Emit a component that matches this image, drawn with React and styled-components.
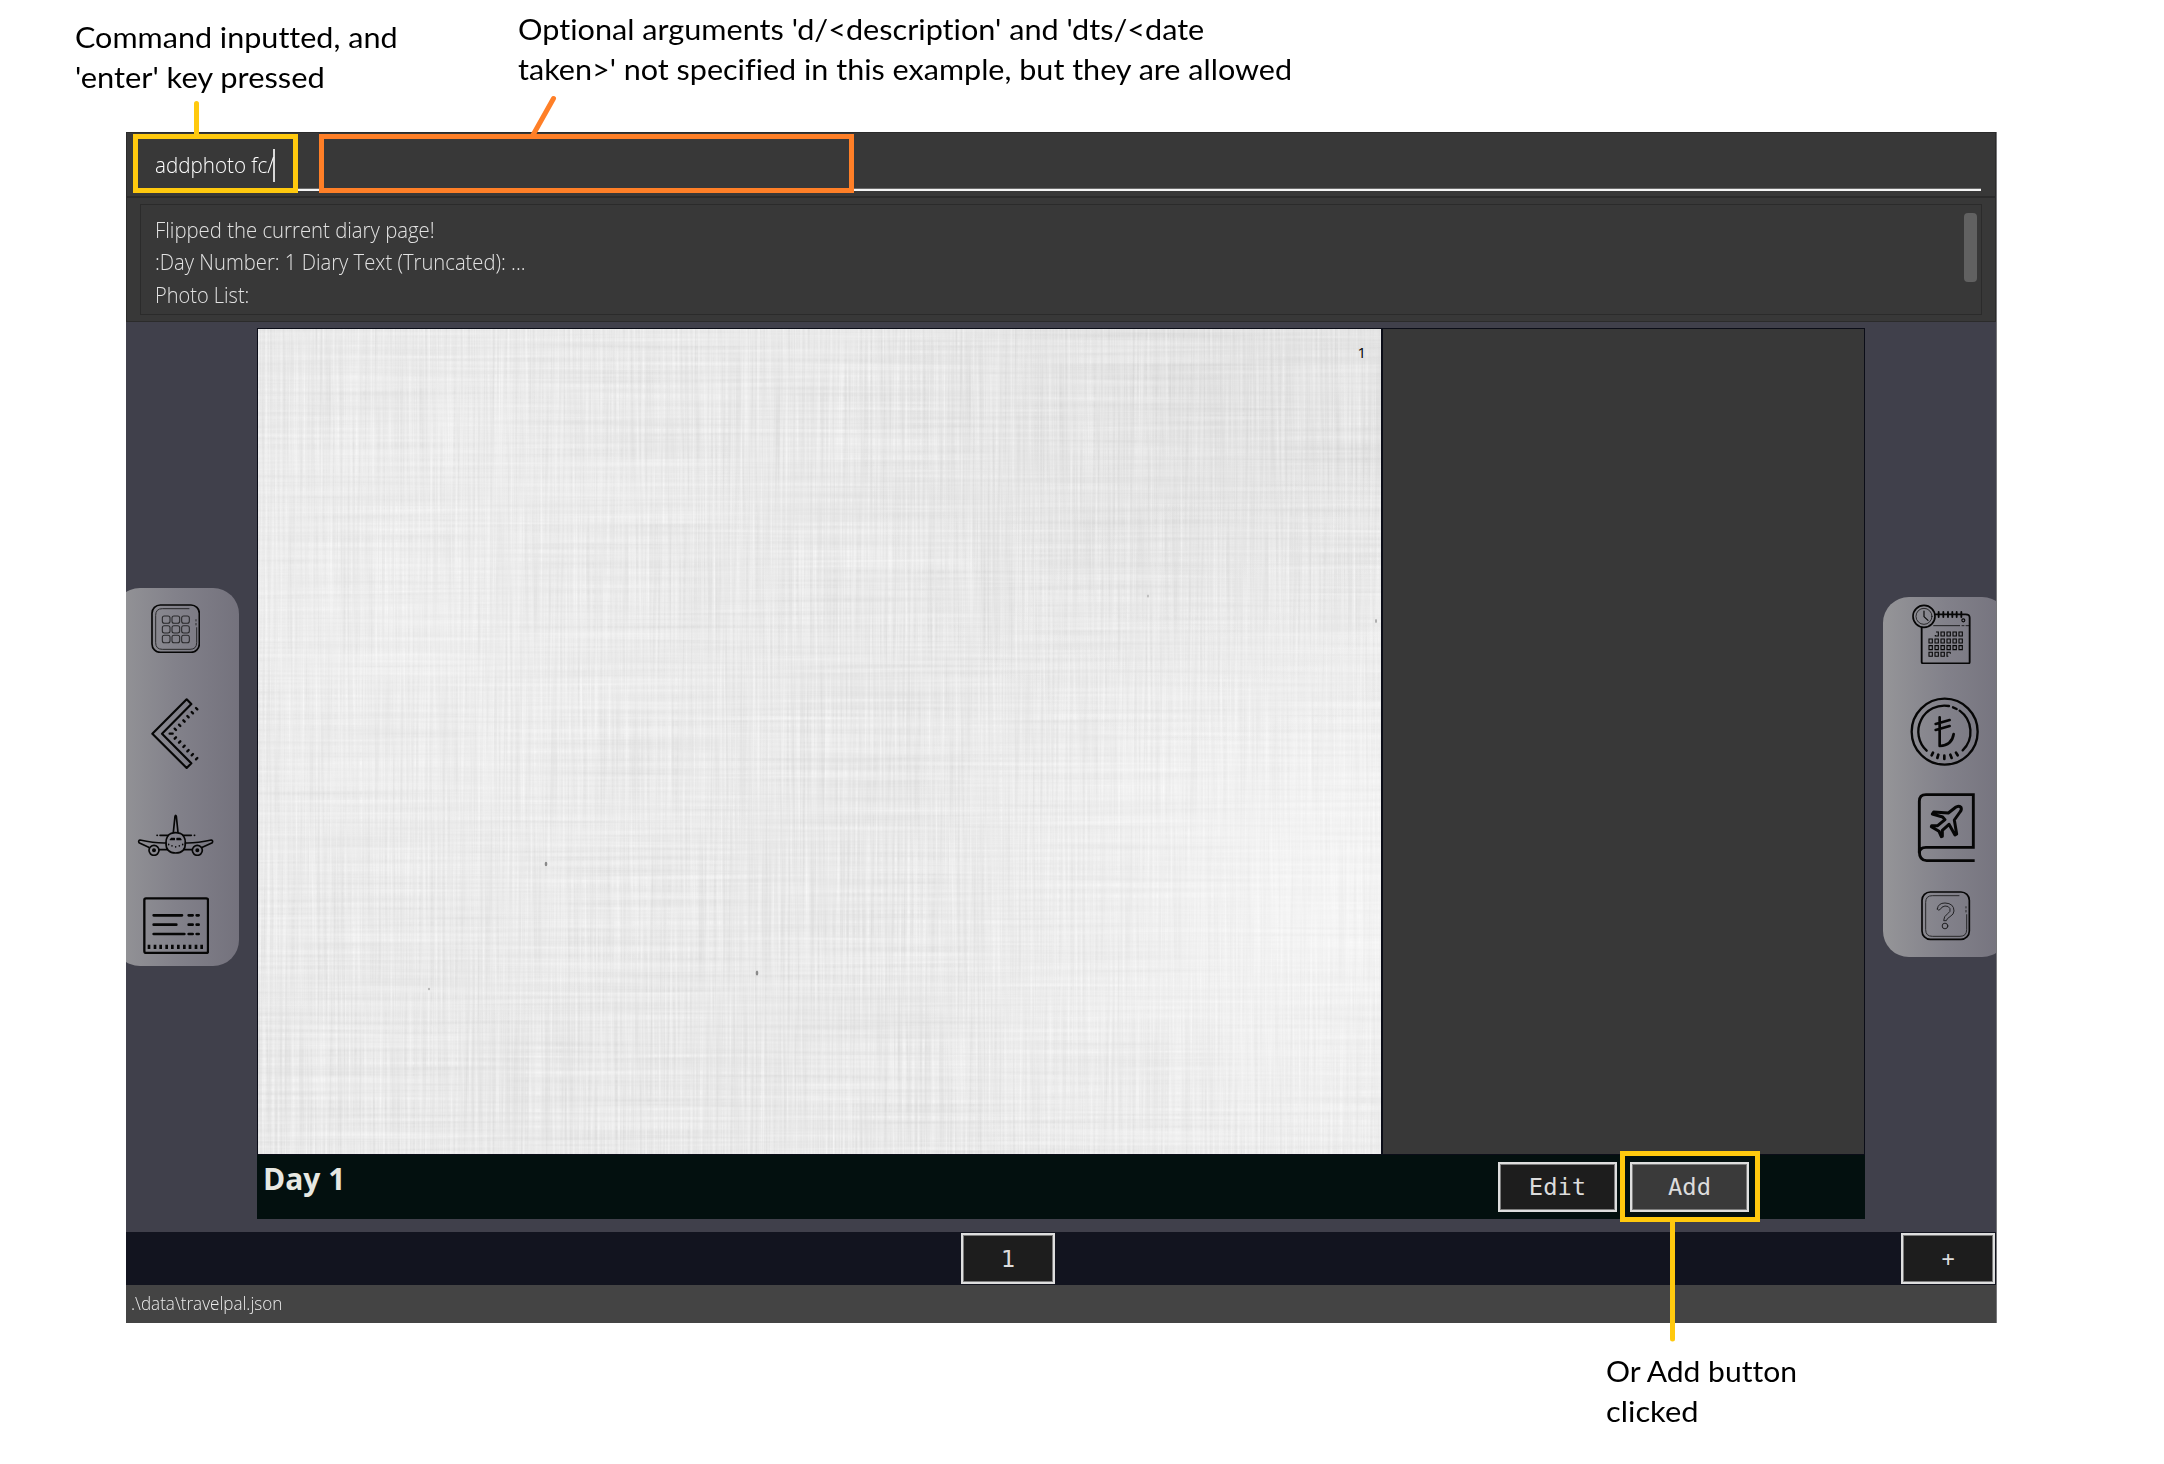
import React, { useLayoutEffect, useRef, useState } from 'react';
import styled, { createGlobalStyle } from 'styled-components';

const GlobalStyle = createGlobalStyle`
  * { box-sizing: border-box; }
  body { margin: 0; background: #fff; overflow: hidden; }
`;

const uiFont = `'Open Sans', 'Noto Sans', sans-serif`;
const monoFont = `'DejaVu Sans Mono', monospace`;
const noteFont = `Lato, 'Open Sans', sans-serif`;

/* ---------- text set to a fixed measure ---------- */
const Measured = styled.span`
  display: inline-block;
  white-space: pre;
  transform-origin: 0 50%;
`;

function Fit({ width, children }) {
  const ref = useRef(null);
  const [scale, setScale] = useState(1);
  useLayoutEffect(() => {
    setScale(width / ref.current.offsetWidth);
  }, [width]);
  return (
    <Measured ref={ref} style={{ transform: `scaleX(${scale})` }}>
      {children}
    </Measured>
  );
}

/* ---------- layout ---------- */
const Sheet = styled.main`
  position: relative;
  width: 2164px;
  height: 1464px;
  padding: 132px 0 0 126px;
  background: #fff;
`;

const AppWindow = styled.section`
  display: flex;
  flex-direction: column;
  width: 1871px;
  height: 1191px;
  border-right: 1px solid #77777a;
  background: #383838;
  overflow: hidden;
  font-family: ${uiFont};
`;

const CommandBar = styled.div`
  flex: none;
  height: 66px;
  padding: 1px 14px 0;
  border: solid #2b2b2b;
  border-width: 1px 1px 2px;
`;

const CommandField = styled.div`
  display: flex;
  align-items: flex-start;
  height: 57px;
  padding: 14px 0 0 14px;
  border-bottom: 2px solid #f4f4f4;
  box-shadow: inset 0 -1px 0 #6b6b6b;
  color: #fff;
  font-size: 22px;
  font-weight: 300;
  line-height: 32px;
`;

const CommandText = styled.div`
  width: 118px;
`;

const Caret = styled.i`
  width: 1.5px;
  height: 33px;
  margin-top: 1px;
  background: #d8d8d8;
`;

const ResultPanel = styled.div`
  flex: none;
  height: 124px;
  padding: 6px 13px;
  border: solid #2b2b2b;
  border-width: 0 1px 1px;
`;

const ResultBox = styled.div`
  display: flex;
  justify-content: space-between;
  height: 111px;
  padding: 8px 4px 0 14px;
  border: 1px solid #2b2b2b;
`;

const ResultText = styled.div`
  color: #e2e2e2;
  font-size: 22px;
  font-weight: 300;
  line-height: 32.3px;
`;

const ScrollThumb = styled.div`
  width: 13px;
  height: 69px;
  border-radius: 4px;
  background: #616161;
`;

const Workspace = styled.div`
  display: flex;
  flex: none;
  height: 910px;
  background: #40404b;
`;

const Rail = styled.div`
  display: flex;
  flex: none;
  width: 131px;
  overflow: hidden;
  justify-content: ${(p) => (p.$side === 'right' ? 'flex-end' : 'flex-start')};
`;

const RailPanel = styled.nav`
  flex: none;
  width: 125px;
  height: ${(p) => p.$height}px;
  margin: ${(p) => p.$top}px ${(p) => (p.$side === 'right' ? '-12px' : '0')} 0 ${(p) => (p.$side === 'left' ? '-12px' : '0')};
  padding-left: ${(p) => (p.$side === 'left' ? 12 : 0)}px;
  border-radius: 26px;
  background: linear-gradient(90deg, #959598, #82818a 50%, #74727d);
`;

const IconButton = styled.button`
  display: block;
  margin: ${(p) => p.$gap}px 0 0 ${(p) => p.$inset}px;
  padding: 0;
  border: 0;
  background: none;
  line-height: 0;
`;

const Diary = styled.article`
  display: flex;
  flex-direction: column;
  flex: none;
  width: 1608px;
  height: 891px;
  margin-top: 6px;
  background: #03100f;
`;

const Spread = styled.div`
  display: flex;
  gap: 2px;
  height: 827px;
  padding: 1px 1px 1px;
  background: #0b0d18;
`;

const Paper = styled.div`
  position: relative;
  width: 1123px;
  background: #ebebeb;
`;

const Texture = styled.svg`
  position: absolute;
  inset: 0;
`;

const PageNumber = styled.div`
  position: relative;
  padding: 13px 15px 0 0;
  color: #000;
  font-size: 15px;
  font-weight: 400;
  line-height: 20px;
  text-align: right;
`;

const Gallery = styled.div`
  flex: 1;
  background: #383838;
`;

const DiaryFooter = styled.footer`
  display: flex;
  flex: 1;
  justify-content: space-between;
  padding: 0 116px 0 6px;
`;

const DayTitle = styled.h1`
  margin: 4px 0 0;
  color: #e7e8e2;
  font-size: 30px;
  font-weight: 700;
  line-height: 40px;
`;

const ButtonRow = styled.div`
  display: flex;
  gap: 13px;
  padding-top: 7px;
`;

const DarkButton = styled.button`
  display: flex;
  align-items: center;
  justify-content: center;
  width: ${(p) => p.$w}px;
  height: ${(p) => p.$h}px;
  padding: 0;
  border: 2px solid #dedede;
  box-shadow: inset 0 0 0 1px #7d7d7d;
  background: ${(p) => (p.$active ? '#3a3a3a' : '#1d1d1d')};
  color: #dcdcdc;
  font: ${(p) => p.$size || 23.8}px / 30px ${monoFont};
`;

const DayNav = styled.div`
  display: grid;
  flex: none;
  grid-template-columns: 835px 94px 1fr 94px 1px;
  height: 53px;
  padding-top: 1px;
  background: #12141f;
  & > :nth-child(1) { grid-column: 2; }
  & > :nth-child(2) { grid-column: 4; }
`;

const StatusBar = styled.div`
  flex: none;
  height: 38px;
  padding: 0 0 0 5px;
  background: #444;
  color: #ececec;
  font-size: 18px;
  font-weight: 300;
  line-height: 36px;
`;

/* ---------- annotations ---------- */
const Note = styled.div`
  position: absolute;
  left: ${(p) => p.$x}px;
  top: ${(p) => p.$y}px;
  color: #000;
  font: 400 28px / 40px ${noteFont};
  font-variant-ligatures: none;
`;

const Highlight = styled.div`
  position: absolute;
  left: ${(p) => p.$x}px;
  top: ${(p) => p.$y}px;
  width: ${(p) => p.$w}px;
  height: ${(p) => p.$h}px;
  border: 5px solid ${(p) => p.$color};
`;

const Pointers = styled.svg`
  position: absolute;
  inset: 0;
  pointer-events: none;
`;

/* ---------- icons ---------- */
function Icon({ box, children }) {
  const [, , w, h] = box;
  return (
    <svg width={w / 3} height={h / 3} viewBox={box.join(' ')} fill="none" stroke="#060606" strokeLinecap="round" strokeLinejoin="round">
      {children}
    </svg>
  );
}

function RoundedTile() {
  return (
    <>
      <rect x="96" y="74" width="142" height="142" rx="25" strokeWidth="5" />
      <path d="M207 85H127Q107 85 107 105V187Q107 207 127 207H210Q230 207 230 187V142M228 134V129M228 122V118" strokeWidth="3" stroke="#29292b" />
    </>
  );
}

function GridIcon() {
  return (
    <Icon box={[93, 71, 148, 148]}>
      <RoundedTile />
      {[107, 136, 165].map((y) =>
        [127, 156, 185].map((x) => (
          <rect key={`${x}-${y}`} x={x} y={y} width="23" height="22" rx="6" strokeWidth="3.2" stroke="#29292b" />
        ))
      )}
    </Icon>
  );
}

const teeth = [[229, 385], [216, 397], [203, 409], [191, 422], [178, 435], [165, 447]];

function BackIcon() {
  return (
    <Icon box={[93, 353, 147, 214]}>
      <path d="M97 460L200 357L214 371L126 460L214 549L200 563Z" strokeWidth="6.5" />
      <path d="M149 460H158" strokeWidth="7" />
      {teeth.map(([x, y]) => (
        <g key={x} strokeWidth="7">
          <path d={`M${x - 1} ${y - 2}L${x + 3} ${y + 2}`} />
          <path d={`M${x - 1} ${922 - y}L${x + 3} ${918 - y}`} />
        </g>
      ))}
    </Icon>
  );
}

function PlaneFrontIcon() {
  return (
    <Icon box={[52, 100, 230, 127]}>
      <g strokeWidth="5">
        <path d="M161 155L166 107Q168 101 170 107L175 155" />
        <path d="M121 164H146M190 164H215M112 164H113M224 164H225" />
        <path d="M155 158Q168 154 181 158Q197 165 197 186Q198 217 168 217Q138 217 139 186Q139 165 155 158Z" />
        <path d="M139 187Q105 188 61 178Q55 180 58 186L87 200M197 187Q231 188 275 178Q281 180 278 186L248 200M119 207H143M193 207H217" />
        <circle cx="103" cy="209" r="15" />
        <circle cx="233" cy="209" r="15" />
        <circle cx="103" cy="209" r="3.5" fill="#060606" />
        <circle cx="233" cy="209" r="3.5" fill="#060606" />
      </g>
      <path d="M152 177L156 173H164V177ZM172 173H181L184 177H172Z" fill="#060606" strokeWidth="4" />
      <path d="M147 191V192M157 195V196M168 198V199M179 195V196M189 191V192" strokeWidth="4.5" />
    </Icon>
  );
}

function ListIcon() {
  return (
    <Icon box={[69, 350, 198, 172]}>
      <rect x="73" y="354" width="191" height="164" rx="5" strokeWidth="7" />
      <path d="M101 405H186M101 433H169M101 461H193M206 405H218M230 405H236M206 433H218M230 433H236M206 461H218M230 461H236" strokeWidth="8" />
      <path d="M87 493V506M105 493V506M122 493V506M140 493V506M157 493V506M175 493V506M193 493V506M210 493V506M228 493V506M245 493V506" strokeWidth="8" strokeLinecap="butt" />
    </Icon>
  );
}

const calendarRows = [
  [131, [1, 2, 3, 4, 5]],
  [152, [0, 1, 2, 3, 4, 5]],
  [172, [0, 1, 2, 3, 4, 5]],
  [192, [0, 1, 2, 3]],
];

function CalendarIcon() {
  return (
    <Icon box={[127, 41, 176, 182]}>
      <path d="M156 112V215Q156 219 160 219H297Q300 219 300 215V82Q300 72 288 72H198" strokeWidth="5.5" />
      <circle cx="163" cy="78" r="33" strokeWidth="5" />
      <circle cx="163" cy="78" r="24" strokeWidth="2.2" />
      <path d="M163 62V79L175 90" strokeWidth="3.4" />
      <path d="M207 65V80M221 65V80M235 65V80M248 65V80M261 65V80M275 65V80" strokeWidth="5.5" />
      <path d="M192 106H270M277 106H283M289 106H298" strokeWidth="2.4" />
      <circle cx="281" cy="90" r="4.5" strokeWidth="3.4" />
      {calendarRows.map(([y, cols]) =>
        cols.map((c) => {
          const x = 183 + c * 18;
          const clipped = (y === 131 && c === 1) || (y === 192 && c === 3);
          const d = !clipped
            ? `M${x - 5} ${y - 6}h10v12h-10Z`
            : c === 1
              ? `M${x - 2} ${y - 6}h7v12h-9v-3`
              : `M${x + 5} ${y - 6}h-10v12h4m6-12v4`;
          return <path key={`${c}-${y}`} d={d} strokeWidth="3.3" strokeLinecap="butt" strokeLinejoin="miter" />;
        })
      )}
    </Icon>
  );
}

function CoinIcon() {
  return (
    <Icon box={[121, 322, 208, 208]}>
      <circle cx="225" cy="426" r="99" strokeWidth="7" />
      <path d="M171 483A78 78 0 0 1 238 349M250 353L261 358M270 363A78 78 0 0 1 279 482" strokeWidth="7" />
      <path d="M190 489L186 497M206 495L203 505M224 498V508M242 495L246 505M259 489L264 497" strokeWidth="8" />
      <path d="M210 383V469Q247 467 252 433M198 403L240 391M198 421L240 409" strokeWidth="8" />
    </Icon>
  );
}

function BookIcon() {
  return (
    <Icon box={[141, 41, 175, 210]}>
      <g strokeLinecap="butt" strokeLinejoin="miter" strokeWidth="8.6">
        <path d="M314 46H168Q148 46 148 66V222Q148 204 168 204H310V42" />
        <path d="M148 216Q148 244 170 244H314" />
      </g>
      <path d="M218 113L187 104L191 98L235 101L258 83Q269 78 273 84Q276 91 270 98L253 122L260 164L255 167L237 135L217 153V171L214 172L207 156L184 142L185 139L203 139L225 121Z" strokeWidth="9" />
    </Icon>
  );
}

function HelpIcon() {
  return (
    <Icon box={[154, 335, 148, 148]}>
      <g transform="translate(61 264)">
        <RoundedTile />
      </g>
      <path d="M203 389Q205 371 226 371Q253 372 253 395Q253 405 241 412Q231 418 230 424H222Q222 411 234 403Q244 397 241 388Q237 379 226 380Q215 382 212 390Q207 396 203 389Z" strokeWidth="2.9" stroke="#1f1f21" />
      <circle cx="226" cy="440" r="8.5" strokeWidth="3" stroke="#1f1f21" />
    </Icon>
  );
}

function LinenTexture() {
  return (
    <Texture width="1123" height="825" viewBox="0 0 1123 825">
      <defs>
        <filter id="linen" x="0" y="0" width="100%" height="100%" colorInterpolationFilters="sRGB">
          <feTurbulence type="fractalNoise" baseFrequency="0.4 0.006" numOctaves="3" seed="4" result="warp" />
          <feTurbulence type="fractalNoise" baseFrequency="0.004 0.24" numOctaves="3" seed="9" result="weft" />
          <feComposite in="warp" in2="weft" operator="arithmetic" k2="0.6" k3="0.4" />
          <feColorMatrix values="0.17 0 0 0 0.828  0.17 0 0 0 0.828  0.17 0 0 0 0.828  0 0 0 0 1" />
        </filter>
        <radialGradient id="glowRight" cx="1060" cy="560" r="430" gradientUnits="userSpaceOnUse">
          <stop offset="0" stopColor="#fff" stopOpacity=".5" />
          <stop offset="1" stopColor="#fff" stopOpacity="0" />
        </radialGradient>
        <radialGradient id="glowLeft" cx="150" cy="330" r="420" gradientUnits="userSpaceOnUse">
          <stop offset="0" stopColor="#fff" stopOpacity=".22" />
          <stop offset="1" stopColor="#fff" stopOpacity="0" />
        </radialGradient>
        <radialGradient id="shade" cx="950" cy="60" r="380" gradientUnits="userSpaceOnUse">
          <stop offset="0" stopColor="#000" stopOpacity=".03" />
          <stop offset="1" stopColor="#000" stopOpacity="0" />
        </radialGradient>
      </defs>
      <rect width="1123" height="825" filter="url(#linen)" />
      <rect width="1123" height="825" fill="url(#glowRight)" />
      <rect width="1123" height="825" fill="url(#glowLeft)" />
      <rect width="1123" height="825" fill="url(#shade)" />
      <g fill="#8a8a8a">
        <ellipse cx="288" cy="535" rx="1.3" ry="2.3" />
        <ellipse cx="499" cy="644" rx="1.3" ry="2.6" />
        <ellipse cx="890" cy="267" rx="0.8" ry="1.5" opacity=".6" />
        <ellipse cx="1118" cy="292" rx="1" ry="2" opacity=".7" />
        <ellipse cx="171" cy="660" rx="1" ry="1.3" opacity=".6" />
      </g>
    </Texture>
  );
}

const leftIcons = [
  { label: 'Main page', gap: 16, inset: 25, Art: GridIcon },
  { label: 'Back', gap: 44.7, inset: 25, Art: BackIcon },
  { label: 'Trips', gap: 44.3, inset: 11.3, Art: PlaneFrontIcon },
  { label: 'Days', gap: 41, inset: 17, Art: ListIcon },
];

const rightIcons = [
  { label: 'Itinerary', gap: 6.7, inset: 29.3, Art: CalendarIcon },
  { label: 'Expenses', gap: 33, inset: 27.3, Art: CoinIcon },
  { label: 'Diary', gap: 26.7, inset: 34, Art: BookIcon },
  { label: 'Help', gap: 28, inset: 38.3, Art: HelpIcon },
];

function IconRail({ side, top, height, items }) {
  return (
    <Rail $side={side}>
      <RailPanel $side={side} $top={top} $height={height}>
        {items.map(({ label, gap, inset, Art }) => (
          <IconButton key={label} aria-label={label} $gap={gap} $inset={inset}>
            <Art />
          </IconButton>
        ))}
      </RailPanel>
    </Rail>
  );
}

const YELLOW = '#ffc90e';
const ORANGE = '#ff7f27';

export default function App() {
  return (
    <Sheet>
      <GlobalStyle />
      <AppWindow>
        <CommandBar>
          <CommandField>
            <CommandText><Fit width={119}>addphoto fc/</Fit></CommandText>
            <Caret />
          </CommandField>
        </CommandBar>
        <ResultPanel>
          <ResultBox>
            <ResultText>
              <div><Fit width={280}>Flipped the current diary page!</Fit></div>
              <div><Fit width={370.5}>:Day Number: 1 Diary Text (Truncated): ...</Fit></div>
              <div><Fit width={94.5}>Photo List:</Fit></div>
            </ResultText>
            <ScrollThumb />
          </ResultBox>
        </ResultPanel>

        <Workspace>
          <IconRail side="left" top={266} height={378} items={leftIcons} />
          <Diary>
            <Spread>
              <Paper>
                <LinenTexture />
                <PageNumber>1</PageNumber>
              </Paper>
              <Gallery />
            </Spread>
            <DiaryFooter>
              <DayTitle><Fit width={82}>Day 1</Fit></DayTitle>
              <ButtonRow>
                <DarkButton $w={119} $h={50}>Edit</DarkButton>
                <DarkButton $w={119} $h={50} $active>Add</DarkButton>
              </ButtonRow>
            </DiaryFooter>
          </Diary>
          <IconRail side="right" top={275} height={360} items={rightIcons} />
        </Workspace>

        <DayNav>
          <DarkButton $w={94} $h={51}>1</DarkButton>
          <DarkButton $w={94} $h={51} $size={22}>+</DarkButton>
        </DayNav>
        <StatusBar><Fit width={151}>.\data\travelpal.json</Fit></StatusBar>
      </AppWindow>

      <Note $x={75} $y={17}>
        <div><Fit width={323}>Command inputted, and</Fit></div>
        <div><Fit width={250}>'enter' key pressed</Fit></div>
      </Note>
      <Note $x={517.5} $y={9}>
        <div><Fit width={686}>{"Optional arguments 'd/<description' and 'dts/<date"}</Fit></div>
        <div><Fit width={774.5}>{"taken>' not specified in this example, but they are allowed"}</Fit></div>
      </Note>
      <Note $x={1605.5} $y={1351}>
        <div><Fit width={191}>Or Add button</Fit></div>
        <div><Fit width={92.5}>clicked</Fit></div>
      </Note>

      <Pointers width="2164" height="1464" fill="none" strokeWidth="5" strokeLinecap="round">
        <path d="M196.5 103.5V136" stroke={YELLOW} />
        <path d="M553.5 98.5L533 135" stroke={ORANGE} />
        <path d="M1672.5 1220V1339" stroke={YELLOW} />
      </Pointers>
      <Highlight $x={133} $y={134} $w={165} $h={59} $color={YELLOW} />
      <Highlight $x={319} $y={134} $w={535} $h={59} $color={ORANGE} />
      <Highlight $x={1620} $y={1151} $w={140} $h={71} $color={YELLOW} />
    </Sheet>
  );
}
